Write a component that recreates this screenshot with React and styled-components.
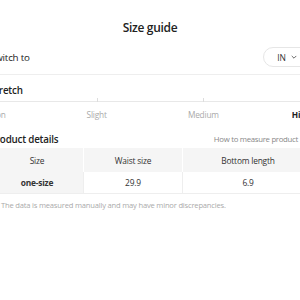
import React from "react";
import styled, { createGlobalStyle } from "styled-components";

const GlobalStyle = createGlobalStyle`
  html, body {
    margin: 0;
    padding: 0;
    background: #ffffff;
    overflow: hidden;
  }
  body {
    font-family: "Open Sans", "Noto Sans", sans-serif;
    color: #222222;
    letter-spacing: -0.2px;
  }
`;

const Page = styled.div`
  width: 300px;
  height: 300px;
  overflow: hidden;
  background: #ffffff;
`;

const Sheet = styled.div`
  width: 320px;
  margin: 0 -10px;
  display: flex;
  flex-direction: column;
`;

const Title = styled.h2`
  margin: 0;
  padding-top: 19px;
  text-align: center;
  font-size: 12px;
  font-weight: 600;
  letter-spacing: -0.3px;
  line-height: 18px;
  color: #222;
`;

const SwitchRow = styled.div`
  display: flex;
  align-items: center;
  justify-content: space-between;
  margin-top: 10px;
  padding-bottom: 7px;
  border-bottom: 1px solid #eeeeee;
`;

const Label = styled.span`
  font-size: 9.8px;
  color: #222;
`;

const UnitPill = styled.button`
  display: flex;
  align-items: center;
  gap: 4px;
  height: 20px;
  padding: 0 11px 0 13px;
  border: 1px solid #e6e6e6;
  border-radius: 10px;
  background: #fff;
  font-family: inherit;
  font-size: 8.5px;
  color: #333;
`;

const SectionHead = styled.div`
  display: flex;
  align-items: center;
  justify-content: space-between;
  margin-top: ${(p) => p.top}px;
  height: 16px;
`;

const Heading = styled.span`
  font-size: 9.8px;
  font-weight: 600;
  color: #222;
`;

const HowTo = styled.span`
  display: flex;
  align-items: center;
  gap: 4px;
  font-size: 7.8px;
  letter-spacing: -0.3px;
  color: #888;
`;

const Track = styled.div`
  position: relative;
  height: 3px;
  border-bottom: 1px solid #e8e8e8;
`;

const Tick = styled.span`
  position: absolute;
  bottom: -1px;
  left: ${(p) => p.at};
  width: 1px;
  height: 4px;
  background: #dddddd;
`;

const Scale = styled.div`
  display: grid;
  grid-template-columns: repeat(6, 1fr);
  margin-top: 6px;
  font-size: 8.3px;
  line-height: 13px;
`;

const Step = styled.span`
  grid-column: ${(p) => p.col};
  text-align: ${(p) => p.align || "center"};
  color: ${(p) => (p.active ? "#222" : "#aaa")};
  font-weight: ${(p) => (p.active ? 700 : 400)};
`;

const Table = styled.table`
  margin-top: 1px;
  width: 100%;
  border-collapse: collapse;
  table-layout: fixed;
  font-size: 8.4px;
`;

const Th = styled.th`
  width: ${(p) => p.w}px;
  height: 24px;
  padding: 0;
  background: #f5f5f5;
  font-weight: 400;
  color: #333;
  border-left: 1px solid ${(p) => (p.first ? "#f5f5f5" : "#ffffff")};
`;

const Td = styled.td`
  height: 21px;
  padding: 0;
  text-align: center;
  color: #333;
  background: ${(p) => (p.head ? "#f5f5f5" : "#fff")};
  font-weight: ${(p) => (p.head ? 700 : 400)};
  border-bottom: 1px solid #eeeeee;
  border-left: 1px solid #eeeeee;
`;

const Note = styled.p`
  display: flex;
  align-items: center;
  gap: 4px;
  margin: 6px 0 0;
  font-size: 7.6px;
  color: #aaa;
`;

const Chevron = ({ size = 8, color = "#555" }) => (
  <svg width={size} height={size} viewBox="0 0 10 10" fill="none">
    <path d="M2.5 4 L5 6.5 L7.5 4" stroke={color} strokeWidth="1.1" strokeLinecap="round" strokeLinejoin="round" />
  </svg>
);

const ChevronRight = () => (
  <svg width="8" height="8" viewBox="0 0 10 10" fill="none">
    <path d="M4 2.5 L6.5 5 L4 7.5" stroke="#888" strokeWidth="1.1" strokeLinecap="round" />
  </svg>
);

const InfoIcon = () => (
  <svg width="7" height="7" viewBox="0 0 10 10" fill="none">
    <circle cx="5" cy="5" r="4.3" stroke="#bbb" strokeWidth="1" />
    <path d="M5 4.4 V7.2 M5 2.8 V3.2" stroke="#bbb" strokeWidth="1" />
  </svg>
);

const levels = [
  { name: "Non", col: "1 / 2", align: "left" },
  { name: "Slight", col: "2 / 4" },
  { name: "Medium", col: "4 / 6" },
  { name: "High", col: "6 / 7", align: "right", active: true },
];

const App = () => {
  return (
    <Page>
      <GlobalStyle />
      <Sheet>
        <Title>Size guide</Title>

        <SwitchRow>
          <Label>Switch to</Label>
          <UnitPill>
            IN <Chevron />
          </UnitPill>
        </SwitchRow>

        <SectionHead top={7}>
          <Heading>Stretch</Heading>
        </SectionHead>
        <Track>
          <Tick at="33.33%" />
          <Tick at="66.66%" />
        </Track>
        <Scale>
          {levels.map((l) => (
            <Step key={l.name} col={l.col} align={l.align} active={l.active}>
              {l.name}
            </Step>
          ))}
        </Scale>

        <SectionHead top={10}>
          <Heading>Product details</Heading>
          <HowTo>
            How to measure product <ChevronRight />
          </HowTo>
        </SectionHead>

        <Table>
          <thead>
            <tr>
              <Th w={92} first>Size</Th>
              <Th w={98}>Waist size</Th>
              <Th w={130}>Bottom length</Th>
            </tr>
          </thead>
          <tbody>
            <tr>
              <Td head>one-size</Td>
              <Td>29.9</Td>
              <Td>6.9</Td>
            </tr>
          </tbody>
        </Table>

        <Note>
          <InfoIcon />
          The data is measured manually and may have minor discrepancies.
        </Note>
      </Sheet>
    </Page>
  );
};

export default App;
